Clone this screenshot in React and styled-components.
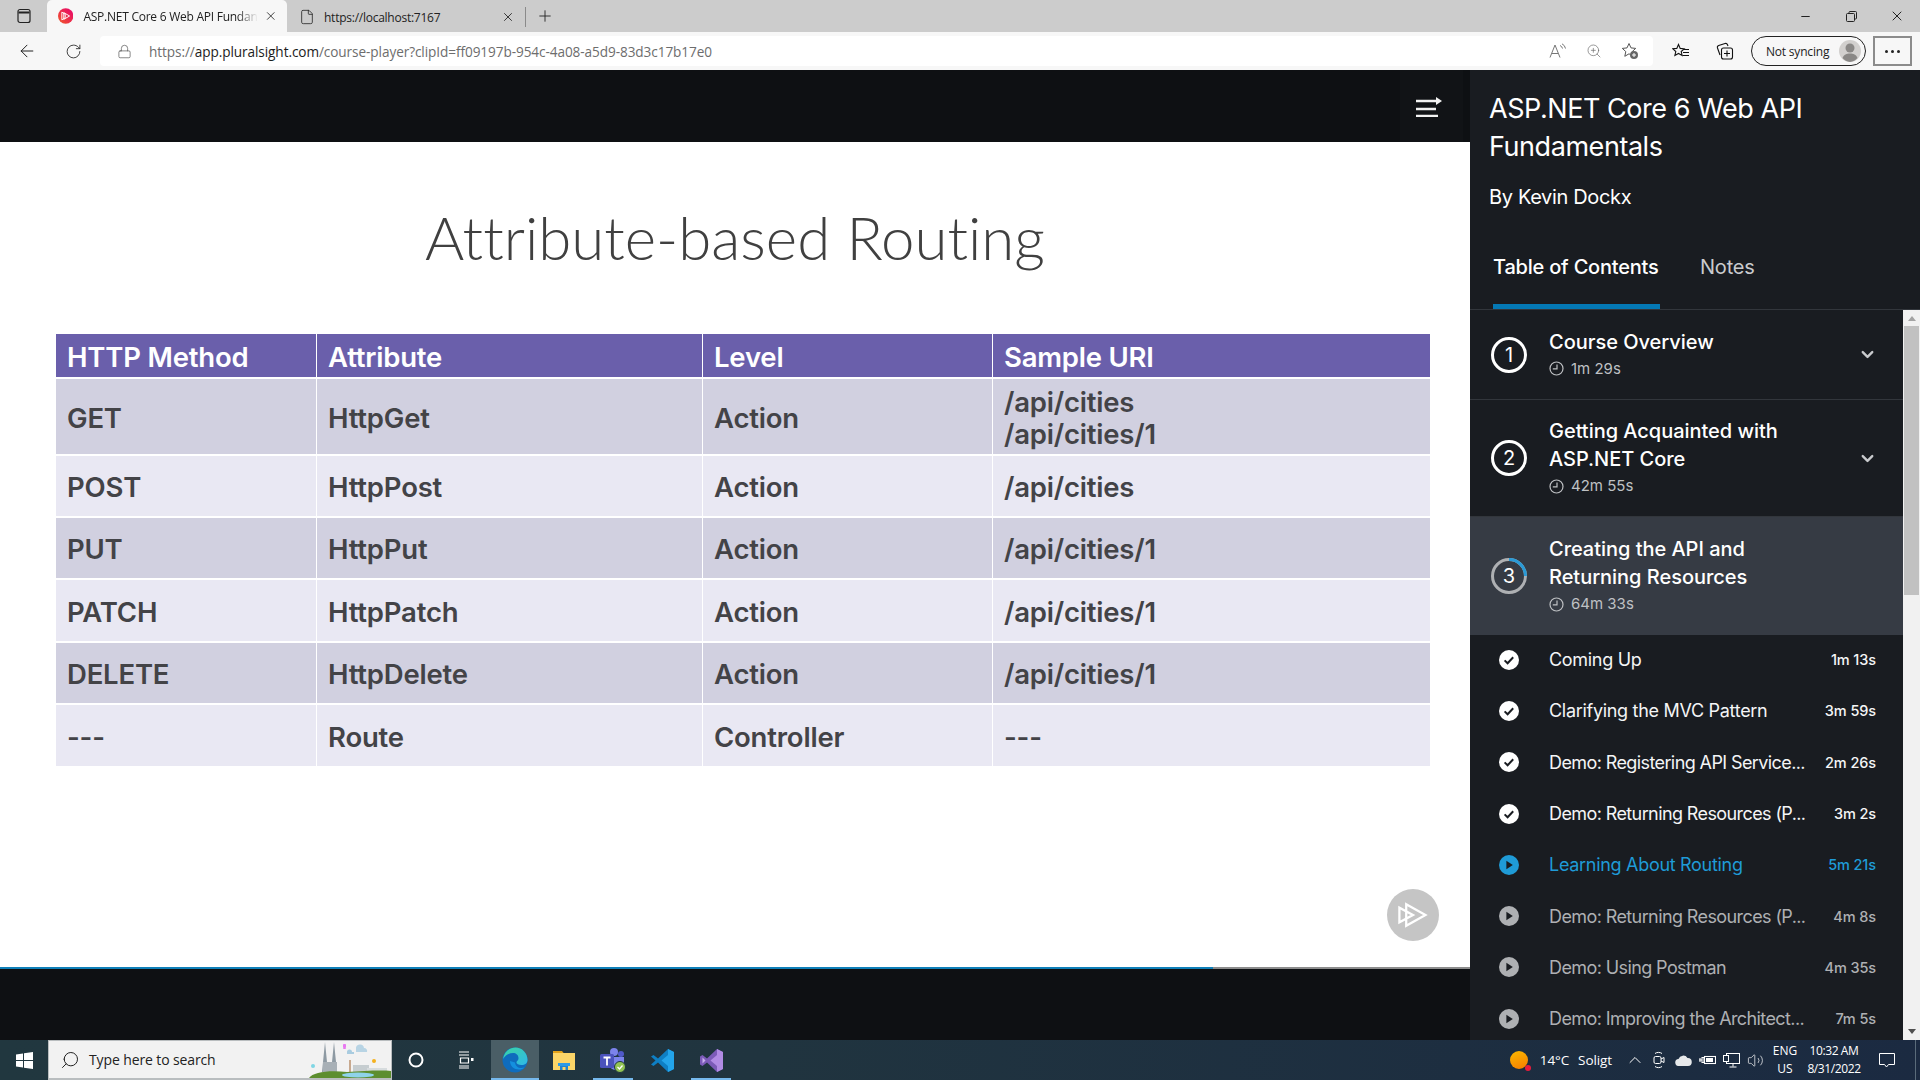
import React from 'react'
import styled, { createGlobalStyle } from 'styled-components'
import {
  ArrowLeft, RotateCw, Lock, Plus, X, Minus, File, ZoomIn, Search, ChevronDown, ChevronUp, Volume2,
} from 'lucide-react'

const GlobalStyle = createGlobalStyle`
  html, body { margin: 0; padding: 0; height: 100%; overflow: hidden; background: #000; }
  * { box-sizing: border-box; }
`

const Screen = styled.div`
  width: 1920px;
  height: 1080px;
  display: flex;
  flex-direction: column;
  overflow: hidden;
  font-family: "Open Sans", "Liberation Sans", sans-serif;
`

/* browser chrome */
const TabStrip = styled.div`
  height: 32px;
  background: #cccccc;
  display: flex;
  align-items: flex-end;
  color: #222;
`
const SideToggle = styled.div`
  width: 47px;
  height: 32px;
  display: flex;
  align-items: center;
  justify-content: center;
`
const Tab = styled.div`
  width: ${p => p.$w}px;
  height: ${p => (p.$active ? 32 : 30)}px;
  background: ${p => (p.$active ? '#f7f7f7' : 'transparent')};
  border-radius: 5px 5px 0 0;
  display: flex;
  align-items: center;
  padding: 0 10px 0 ${p => (p.$active ? 11 : 10)}px;
  font-size: 12px;
  letter-spacing: -0.25px;
`
const TabTitle = styled.span`
  flex: 1;
  margin-left: ${p => p.$gap}px;
  white-space: nowrap;
  mask-image: ${p => (p.$fade ? 'linear-gradient(90deg, #000 88%, transparent)' : 'none')};
`
const TabDivider = styled.div`
  width: 1px;
  height: 20px;
  background: #8a8a8a;
  margin: 0 0 5px 0;
`
const NewTab = styled.div`
  width: 38px;
  height: 32px;
  display: flex;
  align-items: center;
  justify-content: center;
`
const WindowControls = styled.div`
  margin-left: auto;
  display: flex;
  height: 32px;
  align-items: center;
`
const WindowButton = styled.div`
  width: 46px;
  display: flex;
  justify-content: center;
`
const Toolbar = styled.div`
  height: 38px;
  background: #f7f7f7;
  display: flex;
  align-items: flex-start;
  padding-top: 4px;
  color: #222;
`
const NavButton = styled.div`
  width: ${p => p.$w}px;
  height: 30px;
  display: flex;
  align-items: center;
  justify-content: center;
`
const AddressBar = styled.div`
  width: 1553px;
  height: 30px;
  margin-left: 8px;
  background: #fff;
  border-radius: 4px;
  display: flex;
  align-items: center;
  padding-left: 17px;
`
const Url = styled.div`
  margin-left: 17px;
  font-size: 13.6px;
  letter-spacing: -0.08px;
  color: #6d6d6d;
  white-space: nowrap;
  b { font-weight: 400; color: #1c1c1c; }
`
const AddressIcons = styled.div`
  margin-left: auto;
  display: flex;
  align-items: center;
  gap: 19px;
  padding-right: 14px;
  color: #666;
`
const ToolIcons = styled.div`
  display: flex;
  align-items: center;
  height: 30px;
  gap: 26px;
  margin-left: 19px;
`
const SyncPill = styled.div`
  width: 115px;
  height: 30px;
  margin-left: 17px;
  border: 1px solid #222;
  border-radius: 15px;
  display: flex;
  align-items: center;
  padding-left: 14px;
  font-size: 12px;
  letter-spacing: -0.2px;
  justify-content: space-between;
  padding-right: 4px;
  white-space: nowrap;
`
const MoreButton = styled.div`
  width: 39px;
  height: 30px;
  margin-left: 7px;
  border: 2px solid #8b8b8b;
  display: flex;
  align-items: center;
  justify-content: center;
  gap: 3px;
  i { width: 3px; height: 3px; border-radius: 50%; background: #222; }
`

/* page */
const Content = styled.div`
  flex: 1;
  display: flex;
  min-height: 0;
  font-family: Inter, "Noto Sans", sans-serif;
`
const Player = styled.div`
  width: 1470px;
  display: flex;
  flex-direction: column;
  background: #0e1013;
`
const PlayerBar = styled.div`
  height: 72px;
  display: flex;
  justify-content: flex-end;
`
const MenuButton = styled.div`
  width: 63px;
  height: 72px;
  margin-right: 7px;
  background: #111316;
  display: flex;
  align-items: center;
  padding-left: 16px;
`
const Slide = styled.div`
  position: relative;
  height: 825px;
  background: #fff;
  padding: 0 40px 0 56px;
`
const SlideTitle = styled.h1`
  margin: 0 -40px 0 -56px;
  height: 192px;
  display: flex;
  align-items: center;
  justify-content: center;
  font-family: Lato, sans-serif;
  font-weight: 300;
  font-size: 60px;
  font-variant-ligatures: none;
  color: #404040;
  padding-bottom: 2px;
`
const Table = styled.div`
  display: grid;
  grid-template-columns: 260px 385px 289px 437px;
  gap: 2px 1px;
  font-family: Inter, sans-serif;
  font-weight: 600;
  font-size: 27.5px;
  letter-spacing: -0.2px;
`
const Cell = styled.div`
  min-height: ${p => p.$h}px;
  background: ${p => p.$bg};
  color: ${p => p.$color};
  display: flex;
  flex-direction: column;
  justify-content: center;
  padding: 2px 0 0 11px;
  line-height: 32px;
`
const NextButton = styled.div`
  position: absolute;
  left: 1387px;
  top: 747px;
  width: 52px;
  height: 52px;
  border-radius: 50%;
  background: #c5c5c5;
  display: flex;
  align-items: center;
  justify-content: center;
`
const Progress = styled.div`
  height: 2px;
  background: #8c8c8c;
`
const ProgressFill = styled.div`
  height: 100%;
  background: #0f7fb8;
`

/* sidebar */
const Sidebar = styled.aside`
  width: 450px;
  display: flex;
  flex-direction: column;
  background: #191c21;
  color: #fff;
  min-height: 0;
`
const Heading = styled.div`
  padding: 20px 40px 0 19px;
`
const CourseTitle = styled.div`
  font-size: 27px;
  line-height: 38px;
  letter-spacing: -0.45px;
  font-weight: 400;
`
const Author = styled.div`
  margin-top: 17px;
  font-size: 20px;
  line-height: 28px;
  letter-spacing: -0.35px;
`
const Tabs = styled.div`
  margin-top: 42px;
  height: 57px;
  display: flex;
  padding-left: 23px;
  gap: 40px;
  border-bottom: 1px solid #32363c;
`
const SideTab = styled.div`
  height: 56px;
  padding-top: 2px;
  font-size: 20px;
  line-height: 24px;
  font-weight: ${p => (p.$active ? 500 : 400)};
  letter-spacing: -0.2px;
  color: ${p => (p.$active ? '#fff' : '#c9cbce')};
  border-bottom: ${p => (p.$active ? '5px solid #0478b4' : '0')};
  width: ${p => (p.$active ? '167px' : 'auto')};
  white-space: nowrap;
`
const SideBody = styled.div`
  flex: 1;
  display: flex;
  min-height: 0;
`
const Outline = styled.div`
  width: 433px;
  overflow: hidden;
`
const Section = styled.div`
  height: ${p => p.$h}px;
  background: ${p => (p.$current ? '#363b44' : '#191c21')};
  border-bottom: ${p => (p.$last ? '0' : '1px solid #32363c')};
  display: flex;
  align-items: center;
  padding: 0 26px 0 21px;
`
const NumberRing = styled.div`
  position: relative;
  width: 36px;
  height: 36px;
  flex: none;
  border: ${p => (p.$ring ? '0' : '3px solid #fff')};
  border-radius: 50%;
  display: flex;
  align-items: center;
  justify-content: center;
  font-size: 20px;
`
const RingArc = styled.svg`
  position: absolute;
  left: 0;
  top: 0;
`
const SectionText = styled.div`
  flex: 1;
  margin-left: 22px;
  padding-bottom: 3px;
`
const SectionTitle = styled.div`
  font-size: 20px;
  line-height: 28px;
  font-weight: 500;
  letter-spacing: -0.03px;
`
const Duration = styled.div`
  display: flex;
  align-items: center;
  gap: 7px;
  margin-top: 3px;
  font-size: 15px;
  line-height: 20px;
  color: #bfc1c4;
`
const Clip = styled.div`
  height: 51.3px;
  display: flex;
  align-items: center;
  padding: 0 27px 2px 29px;
  color: ${p => p.$color};
`
const ClipTitle = styled.div`
  flex: 1;
  margin-left: 30px;
  font-size: 18px;
  letter-spacing: ${p => (p.$demo ? '-0.6px' : '-0.3px')};
  white-space: nowrap;
`
const ClipTime = styled.div`
  font-size: 14.5px;
  font-weight: 500;
  letter-spacing: -0.1px;
  white-space: nowrap;
`
const Scrollbar = styled.div`
  width: 17px;
  background: #f1f1f1;
  display: flex;
  flex-direction: column;
  align-items: center;
  padding-top: 6px;
`
const Thumb = styled.div`
  width: 15px;
  height: 269px;
  margin-top: 5px;
  background: #c1c1c1;
`
const ArrowUp = styled.div`
  width: 0;
  height: 0;
  border-left: 4px solid transparent;
  border-right: 4px solid transparent;
  border-bottom: 5px solid #a3a3a3;
`
const ArrowDown = styled.div`
  margin-top: auto;
  margin-bottom: 6px;
  width: 0;
  height: 0;
  border-left: 4px solid transparent;
  border-right: 4px solid transparent;
  border-top: 5px solid #505050;
`

/* taskbar */
const Taskbar = styled.div`
  height: 40px;
  background: linear-gradient(90deg, #21373f 0%, #20343f 40%, #1b2a41 100%);
  display: flex;
  align-items: stretch;
  color: #fff;
  font-size: 13px;
`
const StartButton = styled.div`
  width: 48px;
  display: flex;
  align-items: center;
  justify-content: center;
`
const SearchBox = styled.div`
  width: 344px;
  background: #f2f2f2;
  border: 1px solid #b9bdbf;
  border-bottom-width: 2px;
  display: flex;
  align-items: center;
  padding-left: 11px;
  color: #222;
  font-size: 14px;
  position: relative;
  overflow: hidden;
`
const SearchText = styled.span`
  margin-left: 9px;
  letter-spacing: -0.12px;
`
const SearchArt = styled.svg`
  position: absolute;
  right: 0;
  bottom: 0;
`
const TaskItem = styled.div`
  width: ${p => p.$w || 48}px;
  display: flex;
  align-items: center;
  justify-content: center;
  background: ${p => (p.$active ? '#4a5e66' : 'transparent')};
  position: relative;
  &::after {
    content: '';
    display: ${p => (p.$open ? 'block' : 'none')};
    position: absolute;
    bottom: 0;
    left: ${p => (p.$active ? 0 : 4)}px;
    right: ${p => (p.$active ? 0 : 4)}px;
    height: 2px;
    background: #76b9ed;
  }
`
const Tray = styled.div`
  margin-left: auto;
  display: flex;
  align-items: center;
  font-size: 13.5px;
`
const Weather = styled.div`
  display: flex;
  align-items: center;
  gap: 9px;
  margin-right: 11px;
  letter-spacing: -0.1px;
`
const SunDot = styled.div`
  position: relative;
  width: 18px;
  height: 18px;
  border-radius: 50%;
  background: linear-gradient(160deg, #fcb900, #f57c00);
  margin-right: 3px;
  &::after {
    content: '';
    position: absolute;
    right: -3px;
    bottom: -2px;
    width: 6px;
    height: 6px;
    border-radius: 50%;
    background: #e81b3c;
  }
`
const TrayIcon = styled.div`
  width: 24px;
  display: flex;
  justify-content: center;
`
const TrayStack = styled.div`
  width: ${p => p.$w}px;
  text-align: center;
  font-size: 12px;
  letter-spacing: ${p => (p.$tight ? '-0.4px' : '0')};
  line-height: 18px;
  white-space: nowrap;
`
const Notify = styled.div`
  width: 44px;
  margin-right: 6px;
  display: flex;
  justify-content: center;
`
const ShowDesktop = styled.div`
  width: 1px;
  height: 40px;
  background: #5a6b7a;
  margin-right: 4px;
`

const columns = ['HTTP Method', 'Attribute', 'Level', 'Sample URI']
const rows = [
  { h: 75, cells: ['GET', 'HttpGet', 'Action', ['/api/cities', '/api/cities/1']] },
  { h: 60, cells: ['POST', 'HttpPost', 'Action', ['/api/cities']] },
  { h: 60, cells: ['PUT', 'HttpPut', 'Action', ['/api/cities/1']] },
  { h: 61, cells: ['PATCH', 'HttpPatch', 'Action', ['/api/cities/1']] },
  { h: 60, cells: ['DELETE', 'HttpDelete', 'Action', ['/api/cities/1']] },
  { h: 61, cells: ['---', 'Route', 'Controller', ['---']] },
]

const sections = [
  { n: 1, h: 90, title: ['Course Overview'], time: '1m 29s', chevron: true },
  { n: 2, h: 117, title: ['Getting Acquainted with', 'ASP.NET Core'], time: '42m 55s', chevron: true },
  { n: 3, h: 118, title: ['Creating the API and', 'Returning Resources'], time: '64m 33s', current: true },
]

const clips = [
  { title: 'Coming Up', time: '1m 13s', state: 'done' },
  { title: 'Clarifying the MVC Pattern', time: '3m 59s', state: 'done' },
  { title: 'Demo: Registering API Service...', time: '2m 26s', state: 'done' },
  { title: 'Demo: Returning Resources (P...', time: '3m 2s', state: 'done' },
  { title: 'Learning About Routing', time: '5m 21s', state: 'now' },
  { title: 'Demo: Returning Resources (P...', time: '4m 8s', state: 'todo' },
  { title: 'Demo: Using Postman', time: '4m 35s', state: 'todo' },
  { title: 'Demo: Improving the Architect...', time: '7m 5s', state: 'todo' },
]

const clipColor = { done: '#f4f5f6', now: '#1f9bd7', todo: '#aeb0b3' }
const clipIconColor = { done: '#ffffff', now: '#1f9bd7', todo: '#aeb0b3' }

const ClipIcon = ({ state }) => (
  <svg width="20" height="20" viewBox="0 0 20 20" style={{ flex: 'none' }}>
    <circle cx="10" cy="10" r="10" fill={clipIconColor[state]} />
    {state === 'done'
      ? <path d="M5.6 10.4l3 2.9 5.6-6" fill="none" stroke="#191c21" strokeWidth="2" />
      : <path d="M7.4 5.8l6.4 4.2-6.4 4.2z" fill="#191c21" />}
  </svg>
)

const ClockIcon = () => (
  <svg width="15" height="15" viewBox="0 0 15 15" style={{ flex: 'none' }}>
    <circle cx="7.5" cy="7.5" r="6.5" fill="none" stroke="#bfc1c4" strokeWidth="1.2" />
    <path d="M8 3.6v4.3H3.8" fill="none" stroke="#bfc1c4" strokeWidth="1.2" />
  </svg>
)

const PsMark = ({ size = 24, color = '#fff', width = 2 }) => (
  <svg width={size} height={size} viewBox="0 0 30 30">
    <path d="M9 5.500L26 15 9 24.500z M3 8.500v13L15 15z" fill="none" stroke={color} strokeWidth={width} />
  </svg>
)

const Favicon = () => (
  <svg width="16" height="16" viewBox="0 0 16 16">
    <defs>
      <linearGradient id="fav" x1="0" y1="1" x2="1" y2="0">
        <stop offset="0" stopColor="#f05a28" />
        <stop offset="1" stopColor="#e8006f" />
      </linearGradient>
    </defs>
    <circle cx="8" cy="8" r="8" fill="url(#fav)" />
    <path d="M6 4.5L12 8 6 11.5z M4 4v8l3.5-2.2V6.2z" fill="none" stroke="#fff" strokeWidth="1" />
  </svg>
)

const WinLogo = () => (
  <svg width="17" height="17" viewBox="0 0 17 17" fill="#fff">
    <path d="M0 2.4l7-1V8H0z M8 1.2L17 0v8H8z M0 9h7v6.6l-7-1z M8 9h9v8l-9-1.3z" />
  </svg>
)

const Edge = () => (
  <svg width="26" height="26" viewBox="0 0 26 26">
    <defs>
      <linearGradient id="edgeA" x1="0" y1="0" x2="1" y2="1">
        <stop offset="0" stopColor="#3bd4a1" />
        <stop offset="1" stopColor="#2fb8e8" />
      </linearGradient>
    </defs>
    <circle cx="13" cy="13" r="12.5" fill="#0f6cbd" />
    <path d="M1 12C2 5 7 .5 13.5.5 20 .5 25.5 6 25.5 13c0 3-2.500 5-6 5-3 0-5-1.200-5-2.500 0-1.800 2-1.500 2-4.500 0-3-2.500-5-5.500-5C7 6 3 8.500 1 12z" fill="url(#edgeA)" />
    <path d="M8 14c0 5 4 8.500 9 8.500 2 0 4-.6 5.500-2-5 1.500-9-.5-9.500-5z" fill="#1490df" />
  </svg>
)

const Explorer = () => (
  <svg width="22" height="22" viewBox="0 0 22 22">
    <path d="M0 2h9l2 2.500H0z" fill="#e3a21a" />
    <rect x="0" y="4" width="22" height="17" fill="#fbd568" />
    <path d="M7 21v-5h8v5h-2.500v-3h-3v3z" fill="#1f84d0" />
    <rect x="5" y="14" width="12" height="3" fill="#2b9ae6" />
  </svg>
)

const Teams = () => (
  <svg width="28" height="28" viewBox="0 0 28 28">
    <circle cx="15" cy="6" r="4" fill="#7b83eb" />
    <circle cx="22" cy="8" r="3" fill="#5059c9" />
    <path d="M11 11h14v8a5 5 0 0 1-5 5h-4a5 5 0 0 1-5-5z" fill="#7b83eb" />
    <rect x="1" y="8" width="14" height="14" rx="1.500" fill="#4b53bc" />
    <path d="M4.500 11.500h7M8 11.500v8" stroke="#fff" strokeWidth="1.800" />
    <circle cx="21" cy="21" r="5.500" fill="#92c353" stroke="#1f3540" />
    <path d="M18.500 21l2 2 3-3.500" fill="none" stroke="#fff" strokeWidth="1.300" />
  </svg>
)

const VsCode = () => (
  <svg width="25" height="25" viewBox="0 0 25 25">
    <path d="M18 1l6 3v17l-6 3L8 14.500 3.500 18 1 16.500 5.500 12.500 1 8.500 3.500 7 8 10.500z" fill="#0e7fc4" />
    <path d="M18 1l6 3v17l-6 3z M18 7l-6.500 5.500L18 18z" fill="#23a4ea" fillRule="evenodd" />
  </svg>
)

const VisualStudio = () => (
  <svg width="25" height="25" viewBox="0 0 25 25">
    <path d="M18 1l6 3v17l-6 3L8 14.500 3.500 18 1 16.500V8.500L3.500 7 8 10.500z" fill="#7c5bb8" />
    <path d="M18 1l6 3v17l-6 3z M18 7l-6.500 5.500L18 18z" fill="#b18be4" fillRule="evenodd" />
    <path d="M3.500 9.500v6l3-3z" fill="#c9b0ee" />
  </svg>
)

const CityArt = () => (
  <SearchArt width="82" height="38" viewBox="0 0 82 38">
    <path d="M13 32L16 2l3 30z M22 32L25 2l3 30z" fill="#8e9aa3" />
    <rect x="14" y="22" width="14" height="11" fill="#a8b0b6" />
    <rect x="40" y="20" width="2" height="14" fill="#c8a98f" />
    <rect x="44" y="25" width="16" height="9" fill="#c6cdd0" />
    <rect x="58" y="28" width="20" height="6" fill="#d7dcde" />
    <path d="M34 6h3M35.500 4v5" stroke="#e879f0" strokeWidth="2.500" />
    <circle cx="65" cy="21" r="2" fill="#f5b21f" />
    <path d="M47 9a4 4 0 0 1 8-1 3 3 0 0 1 3 4h-11z" fill="#b8d4e4" />
    <path d="M38 12a2.500 2.500 0 0 1 5 0h2v2h-7z" fill="#a9cce0" />
    <circle cx="4" cy="26" r="2" fill="#7fd6e4" />
    <path d="M0 38c4-6 20-8 38-6 16-1 34-2 44-1v7z" fill="#5d8e2f" />
    <ellipse cx="49" cy="35" rx="16" ry="2.500" fill="#8fd3ea" />
  </SearchArt>
)

export default function App() {
  return (
    <Screen>
      <GlobalStyle />
      <TabStrip>
        <SideToggle>
          <svg width="16" height="16" viewBox="0 0 16 16" fill="none" stroke="#222" strokeWidth="1.200">
            <rect x="2" y="1.500" width="12" height="13" rx="2" />
            <path d="M2.500 4.500h11" strokeWidth="2" />
          </svg>
        </SideToggle>
        <Tab $active $w={240}>
          <Favicon />
          <TabTitle $gap={10} $fade>ASP.NET Core 6 Web API Fundan</TabTitle>
          <X size={14} strokeWidth={1.5} style={{ marginLeft: 6 }} />
        </Tab>
        <Tab $w={238}>
          <File size={16} strokeWidth={1.2} style={{ marginLeft: 2 }} />
          <TabTitle $gap={9}>https://localhost:7167</TabTitle>
          <X size={14} strokeWidth={1.5} />
        </Tab>
        <TabDivider />
        <NewTab><Plus size={18} strokeWidth={1.2} /></NewTab>
        <WindowControls>
          <WindowButton><Minus size={13} strokeWidth={2} /></WindowButton>
          <WindowButton>
            <svg width="11" height="11" viewBox="0 0 11 11" fill="none" stroke="#222">
              <rect x=".5" y="2.500" width="8" height="8" rx="1" />
              <path d="M3 2.500V1.500a1 1 0 0 1 1-1h5.500a1 1 0 0 1 1 1V7a1 1 0 0 1-1 1h-1" />
            </svg>
          </WindowButton>
          <WindowButton><X size={16} strokeWidth={1.5} /></WindowButton>
        </WindowControls>
      </TabStrip>
      <Toolbar>
        <NavButton $w={54}><ArrowLeft size={20} strokeWidth={1.2} /></NavButton>
        <NavButton $w={38}><RotateCw size={17} strokeWidth={1.2} /></NavButton>
        <AddressBar>
          <Lock size={15} strokeWidth={1} color="#444" />
          <Url>https://<b>app.pluralsight.com</b>/course-player?clipId=ff09197b-954c-4a08-a5d9-83d3c17b17e0</Url>
          <AddressIcons>
            <svg width="18" height="16" viewBox="0 0 18 16" fill="none" stroke="#777" strokeWidth="1">
              <path d="M1 14.500L6 2l5 12.500M3 10.500h6" />
              <path d="M11 2.500a4 4 0 0 1 2.500 3M13 .8a6.500 6.500 0 0 1 3.500 4.700" />
            </svg>
            <ZoomIn size={16} strokeWidth={1} />
            <svg width="18" height="18" viewBox="0 0 18 18">
              <path d="M8 1.500l2 4.400 4.700.5-3.500 3.200 1 4.700L8 11.800l-4.200 2.500 1-4.700L1.300 6.400 6 5.900z" fill="none" stroke="#555" strokeWidth="1" />
              <circle cx="13" cy="13" r="4" fill="#666" />
              <path d="M11 13h4M13 11v4" stroke="#fff" strokeWidth="1" />
            </svg>
          </AddressIcons>
        </AddressBar>
        <ToolIcons>
          <svg width="18" height="16" viewBox="0 0 18 16" fill="none" stroke="#111" strokeWidth="1.100">
            <path d="M6.500 1.500l1.700 3.900 4 .4-3 2.700.9 4-3.600-2.100-3.600 2.100.9-4-3-2.700 4-.4z" />
            <path d="M12 6.500h5M11 9.500h6M10.500 12.500h6.500" />
          </svg>
          <svg width="18" height="18" viewBox="0 0 18 18" fill="none" stroke="#111" strokeWidth="1.100">
            <rect x="5.500" y="6" width="11" height="11" rx="2" />
            <path d="M11 8.500v6M8 11.500h6" />
            <path d="M4 13L1.500 6a2 2 0 0 1 1.200-2.500L9 1.500a2 2 0 0 1 2.500 1.200L12 4" />
          </svg>
        </ToolIcons>
        <SyncPill>
          Not syncing
          <svg width="22" height="22" viewBox="0 0 22 22">
            <circle cx="11" cy="11" r="11" fill="#d2d0ce" />
            <circle cx="11" cy="8" r="4.500" fill="#8a8886" />
            <path d="M3.500 18c1.500-3.500 4-4.500 7.500-4.500s6 1 7.500 4.500A11 11 0 0 1 11 22a11 11 0 0 1-7.500-4z" fill="#8a8886" />
          </svg>
        </SyncPill>
        <MoreButton><i /><i /><i /></MoreButton>
      </Toolbar>

      <Content>
        <Player>
          <PlayerBar>
            <MenuButton>
              <svg width="27" height="22" viewBox="0 0 27 22" fill="none" stroke="#f2f2f2" strokeWidth="2.500">
                <path d="M0 6h22M0 14h20M0 21h22" />
                <path d="M20 2l6 4-6 4z" fill="#f2f2f2" stroke="none" />
              </svg>
            </MenuButton>
          </PlayerBar>
          <Slide>
            <SlideTitle>Attribute-based Routing</SlideTitle>
            <Table>
              {columns.map(c => <Cell key={c} $h={43} $bg="#6a5fab" $color="#fff">{c}</Cell>)}
              {rows.map((row, i) => row.cells.map((cell, j) => (
                <Cell key={`${i}-${j}`} $h={row.h} $bg={i % 2 ? '#e9e8f3' : '#d1d0e0'} $color="#434347">
                  {Array.isArray(cell) ? cell.map(line => <div key={line}>{line}</div>) : cell}
                </Cell>
              )))}
            </Table>
            <NextButton><PsMark size={34} /></NextButton>
          </Slide>
          <Progress><ProgressFill style={{ width: `${(1213 / 1470) * 100}%` }} /></Progress>
        </Player>

        <Sidebar>
          <Heading>
            <CourseTitle>ASP.NET Core 6 Web API<br />Fundamentals</CourseTitle>
            <Author>By Kevin Dockx</Author>
          </Heading>
          <Tabs>
            <SideTab $active>Table of Contents</SideTab>
            <SideTab>Notes</SideTab>
          </Tabs>
          <SideBody>
            <Outline>
              {sections.map(s => (
                <Section key={s.n} $h={s.h} $current={s.current} $last={s.current}>
                  <NumberRing $ring={s.current}>
                    {s.current && (
                      <RingArc width="36" height="36" viewBox="0 0 36 36" fill="none" strokeWidth="3">
                        <circle cx="18" cy="18" r="16.500" stroke="#aeb0b3" />
                        <path d="M18 1.500A16.500 16.500 0 0 1 34.500 18" stroke="#2a9ad6" />
                      </RingArc>
                    )}
                    {s.n}
                  </NumberRing>
                  <SectionText>
                    <SectionTitle>{s.title.map(t => <div key={t}>{t}</div>)}</SectionTitle>
                    <Duration><ClockIcon />{s.time}</Duration>
                  </SectionText>
                  {s.chevron && <ChevronDown size={19} strokeWidth={3} color="#c9cbce" />}
                </Section>
              ))}
              {clips.map((c, i) => (
                <Clip key={i} $color={clipColor[c.state]}>
                  <ClipIcon state={c.state} />
                  <ClipTitle $demo={c.title.startsWith('Demo')}>{c.title}</ClipTitle>
                  <ClipTime>{c.time}</ClipTime>
                </Clip>
              ))}
            </Outline>
            <Scrollbar>
              <ArrowUp />
              <Thumb />
              <ArrowDown />
            </Scrollbar>
          </SideBody>
        </Sidebar>
      </Content>

      <Taskbar>
        <StartButton><WinLogo /></StartButton>
        <SearchBox>
          <Search size={20} strokeWidth={1.2} style={{ transform: 'scaleX(-1)' }} />
          <SearchText>Type here to search</SearchText>
          <CityArt />
        </SearchBox>
        <TaskItem $w={48}>
          <svg width="16" height="16" viewBox="0 0 16 16" fill="none" stroke="#fff" strokeWidth="2"><circle cx="8" cy="8" r="6.500" /></svg>
        </TaskItem>
        <TaskItem $w={51}>
          <svg width="16" height="18" viewBox="0 0 16 18" fill="none" stroke="#fff" strokeWidth="1.200">
            <path d="M1 1h10M1 4h10M2.500 7h8v5h-8zM1 15h10M1 17h10" />
            <rect x="13" y="7" width="2.500" height="3" fill="#fff" stroke="none" />
          </svg>
        </TaskItem>
        <TaskItem $w={48} $active $open><Edge /></TaskItem>
        <TaskItem $w={50}><Explorer /></TaskItem>
        <TaskItem $w={48} $open><Teams /></TaskItem>
        <TaskItem $w={50}><VsCode /></TaskItem>
        <TaskItem $w={48} $open><VisualStudio /></TaskItem>
        <Tray>
          <Weather>
            <SunDot />
            <span>14°C</span>
            <span>Soligt</span>
          </Weather>
          <TrayIcon><ChevronUp size={20} strokeWidth={1.2} /></TrayIcon>
          <TrayIcon>
            <svg width="14" height="18" viewBox="0 0 14 18" fill="none" stroke="#fff" strokeWidth="1">
              <rect x="2" y="5.500" width="7" height="7" rx="1.500" />
              <path d="M9 8l3-1.500v5L9 10M3 2.500C5 1 8 1 10 2.500M3 15.500c2 1.500 5 1.500 7 0" />
            </svg>
          </TrayIcon>
          <TrayIcon>
            <svg width="17" height="11" viewBox="0 0 17 11"><path d="M4 11a3.500 3.500 0 0 1-.5-7 5 5 0 0 1 9-1 4 4 0 0 1 .5 8z" fill="#e6e8ea" /></svg>
          </TrayIcon>
          <TrayIcon>
            <svg width="17" height="12" viewBox="0 0 17 12" fill="none" stroke="#fff" strokeWidth="1.100">
              <rect x="5.500" y="2.500" width="11" height="7" />
              <rect x="7" y="4" width="7" height="4" fill="#fff" stroke="none" />
              <path d="M0 6h3M3 3.500h2v5H3zM1 4v4" />
            </svg>
          </TrayIcon>
          <TrayIcon>
            <svg width="17" height="15" viewBox="0 0 17 15" fill="none" stroke="#fff" strokeWidth="1">
              <rect x="3.500" y=".5" width="13" height="10" />
              <rect x=".5" y="2.500" width="5" height="6" fill="#1c2c40" />
              <path d="M10 10.500v3M6.500 14h7" />
            </svg>
          </TrayIcon>
          <TrayIcon><Volume2 size={17} strokeWidth={1} /></TrayIcon>
          <TrayStack $w={36}>ENG<br />US</TrayStack>
          <TrayStack $w={62} $tight>10:32 AM<br />8/31/2022</TrayStack>
          <Notify>
            <svg width="16" height="15" viewBox="0 0 16 15" fill="none" stroke="#fff" strokeWidth="1">
              <path d="M.5.500h15v11H9.500L7.500 14 5.500 11.500h-5z" />
            </svg>
          </Notify>
          <ShowDesktop />
        </Tray>
      </Taskbar>
    </Screen>
  )
}
